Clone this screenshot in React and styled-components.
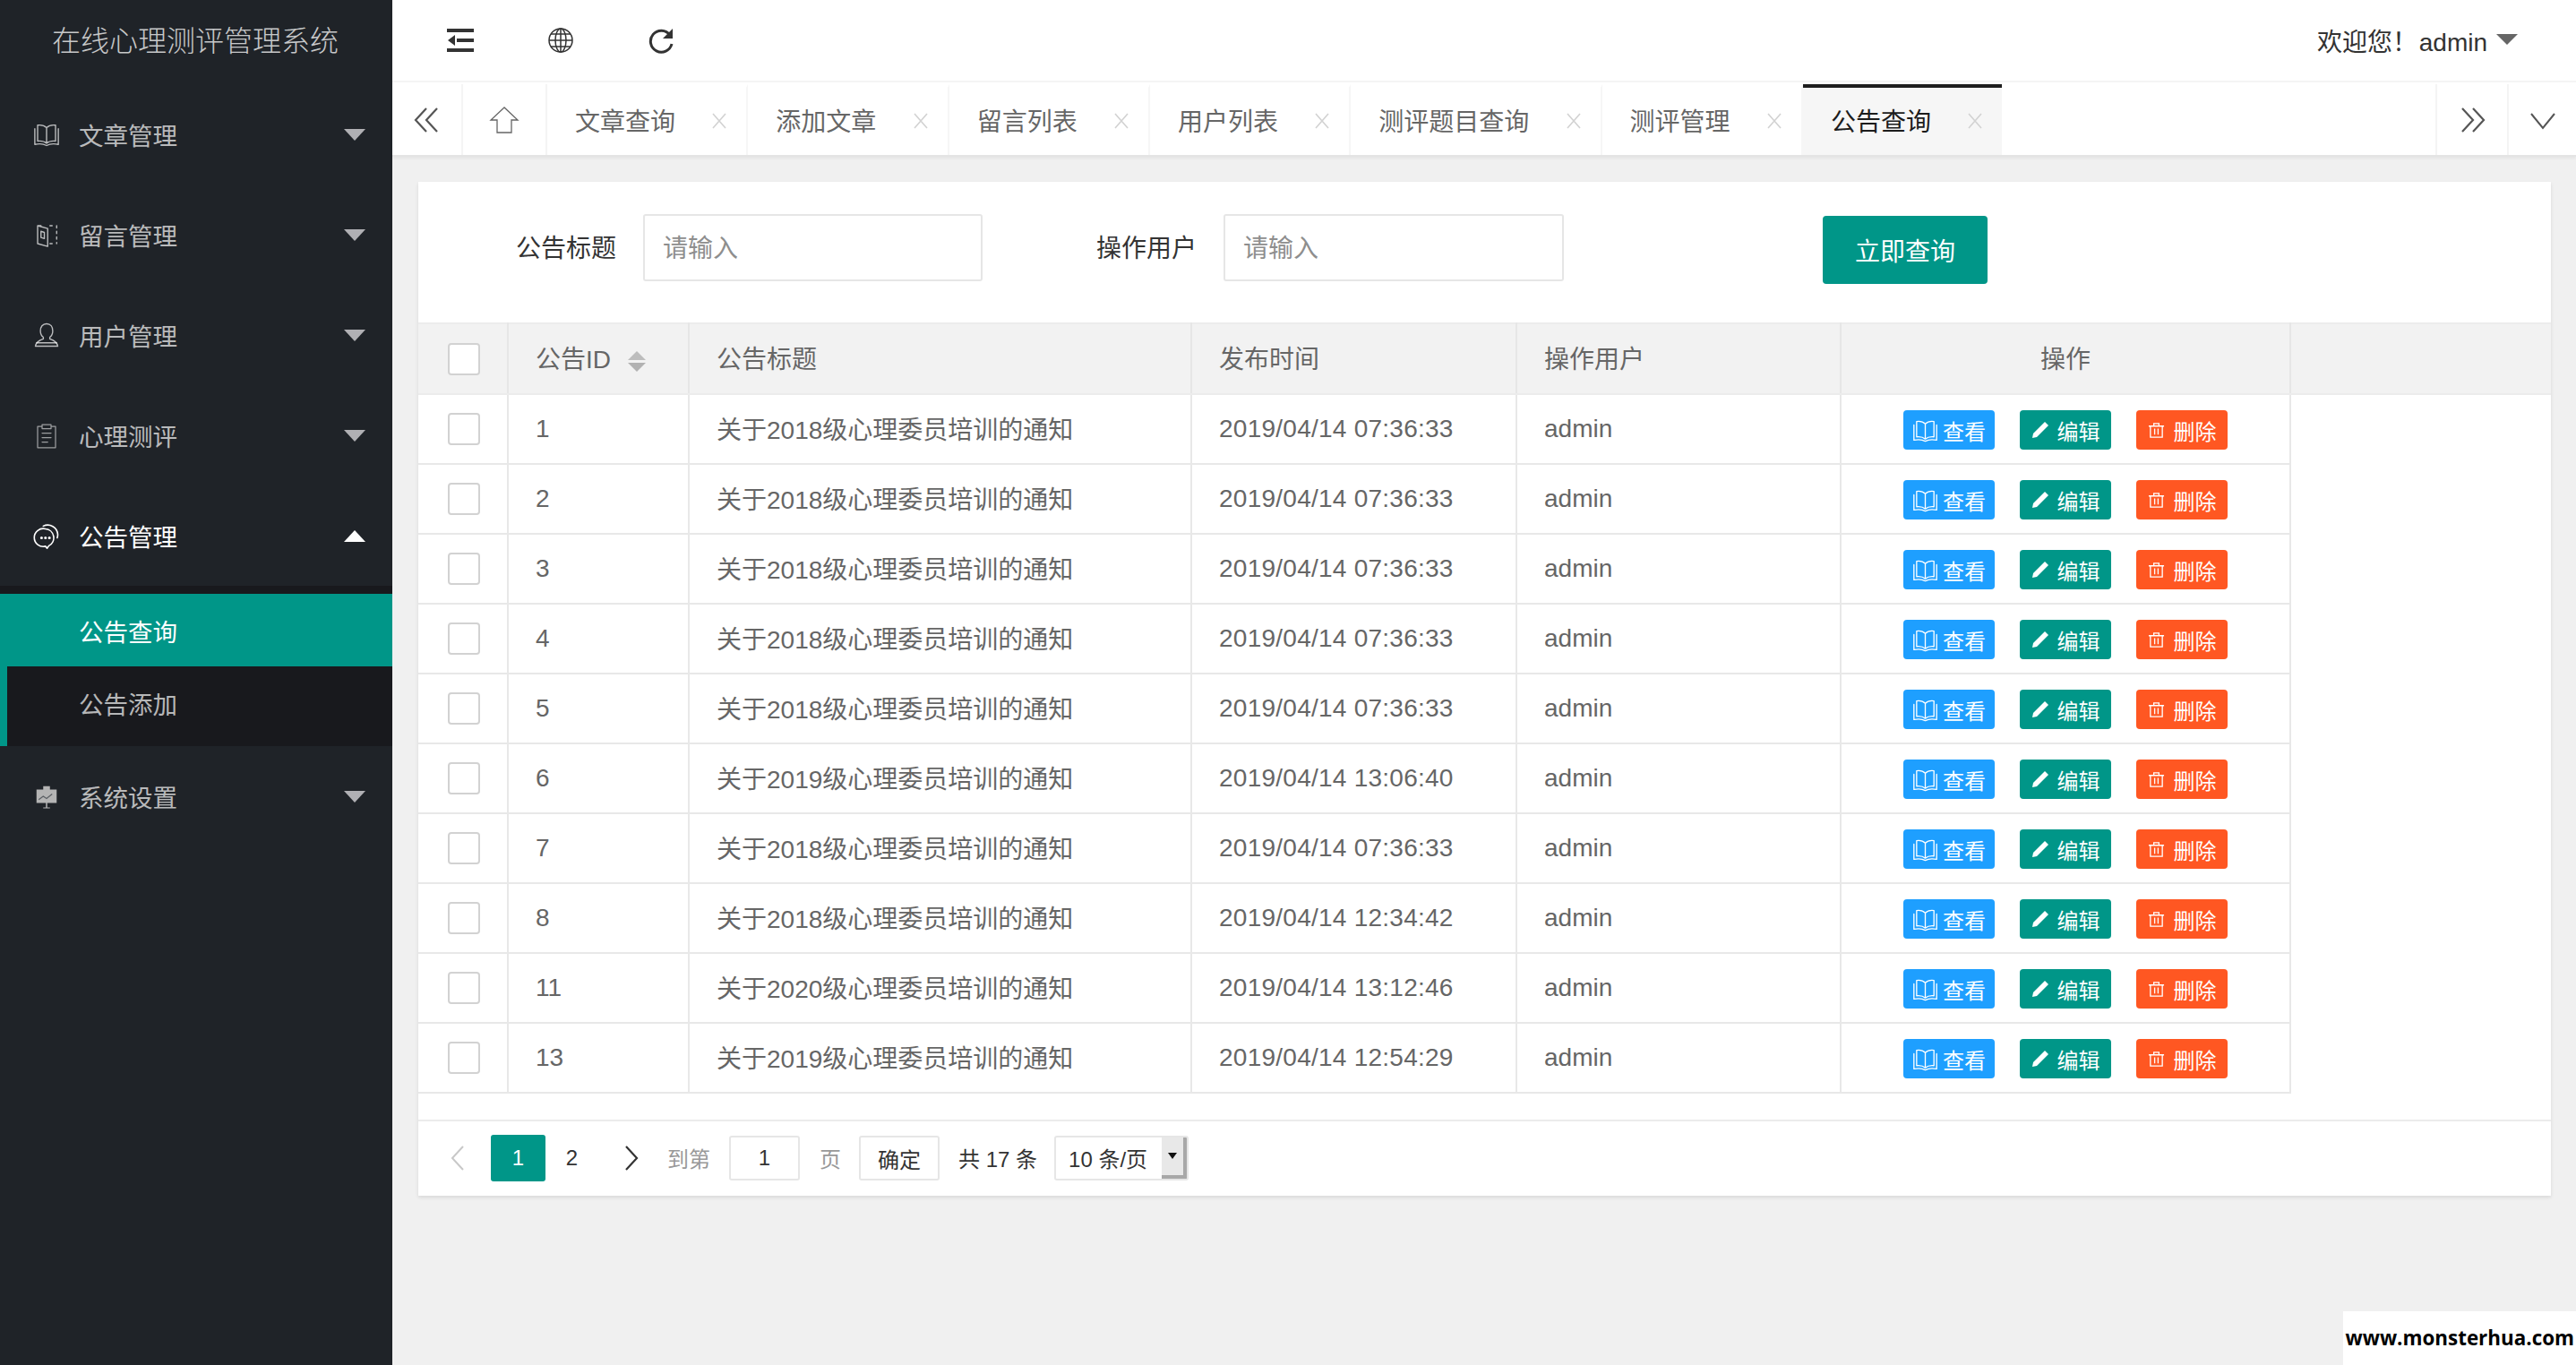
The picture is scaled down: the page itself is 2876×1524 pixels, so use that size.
import React from "react";
import styled, { createGlobalStyle } from "styled-components";

const Global = createGlobalStyle`
  html, body { margin: 0; padding: 0; background: #f0f0f0; }
  body { font-family: "Liberation Sans", "Noto Sans CJK SC", sans-serif; color: #666; }
  * { box-sizing: border-box; }
`;

const Page = styled.div`
  position: relative;
  display: grid;
  grid-template-columns: 438px 1fr;
  width: 2876px;
  height: 1524px;
  overflow: hidden;
  background: #f0f0f0;
`;

/* ---------- sidebar ---------- */
const Sidebar = styled.aside`
  background: #1f2328;
  display: flex;
  flex-direction: column;
`;
const Logo = styled.div`
  height: 94px;
  display: flex;
  align-items: center;
  justify-content: center;
  font-size: 32px;
  font-weight: 300;
  color: rgba(255, 255, 255, 0.75);
  padding: 0 2px 8px 0;
`;
const NavItem = styled.div`
  height: 112px;
  display: flex;
  align-items: center;
  padding: 0 30px 0 37px;
  font-size: 27.5px;
  color: ${(p) => (p.$open ? "#fff" : "rgba(255,255,255,.7)")};
`;
const NavIcon = styled.svg`
  width: 30px;
  height: 30px;
  margin-right: 21px;
  flex: none;
`;
const NavLabel = styled.span`
  flex: 1;
`;
const Caret = styled.i`
  width: 0;
  height: 0;
  border-left: 12px solid transparent;
  border-right: 12px solid transparent;
  ${(p) =>
    p.$up
      ? "border-bottom: 13px solid #fff;"
      : "border-top: 13px solid #b0b0b4;"}
`;
const SubMenu = styled.div`
  background: #18191d;
  padding-top: 9px;
`;
const SubItem = styled.div`
  height: ${(p) => (p.$active ? 81 : 89)}px;
  display: flex;
  align-items: center;
  padding-left: ${(p) => (p.$active ? 88 : 80)}px;
  font-size: 27.5px;
  padding-bottom: ${(p) => (p.$active ? 0 : 8)}px;
  color: ${(p) => (p.$active ? "#fff" : "rgba(255,255,255,.7)")};
  background: ${(p) => (p.$active ? "#009688" : "transparent")};
  border-left: ${(p) => (p.$active ? "0" : "8px solid #009688")};
`;

/* ---------- header ---------- */
const Main = styled.main`
  display: flex;
  flex-direction: column;
  min-width: 0;
`;
const Header = styled.header`
  height: 92px;
  background: #fff;
  border-bottom: 2px solid #f4f4f4;
  display: flex;
  align-items: center;
  padding: 0 65px 0 61px;
`;
const HeadIcon = styled.svg`
  width: 30px;
  height: 30px;
  margin-right: 82px;
  color: #333;
  flex: none;
`;
const Welcome = styled.div`
  margin-left: auto;
  display: flex;
  align-items: center;
  font-size: 28px;
  color: #333;
  word-spacing: -6px;
  white-space: pre;
`;
const UserCaret = styled.i`
  width: 0;
  height: 0;
  margin-left: 10px;
  margin-bottom: 3px;
  border-left: 12px solid transparent;
  border-right: 12px solid transparent;
  border-top: 12px solid #666;
`;

/* ---------- tabs ---------- */
const TabBar = styled.nav`
  height: 83px;
  padding-top: 2px;
  background: #fff;
  border-bottom: 2px solid #e4e4e4;
  box-shadow: 0 2px 3px rgba(0, 0, 0, 0.05);
  display: flex;
  color: #666;
`;
const TabControl = styled.div`
  width: ${(p) => p.$w}px;
  flex: none;
  display: flex;
  align-items: center;
  justify-content: center;
  border-left: ${(p) => (p.$left ? "2px solid #f4f4f4" : "0")};
  border-right: ${(p) => (p.$right ? "2px solid #f4f4f4" : "0")};
`;
const TabList = styled.div`
  flex: 1;
  display: flex;
`;
const Tab = styled.div`
  display: flex;
  align-items: center;
  padding: 0 21px 4px 31px;
  font-size: 28px;
  border-right: ${(p) => (p.$active ? "0" : "2px solid #f6f6f6")};
  border-top: 4px solid ${(p) => (p.$active ? "#1f1f1f" : "transparent")};
  color: ${(p) => (p.$active ? "#1c1c1c" : "#666")};
  background: ${(p) => (p.$active ? "#f6f6f6" : "#fff")};
`;
const TabClose = styled.svg`
  width: 18px;
  height: 18px;
  margin: 3px 0 0 40.3px;
  color: #d2d2d2;
`;

/* ---------- content ---------- */
const Content = styled.div`
  padding: 28px 28px 0 29px;
`;
const Card = styled.section`
  background: #fff;
  box-shadow: 0 2px 4px rgba(0, 0, 0, 0.1);
`;
const SearchForm = styled.div`
  height: 157px;
  display: flex;
  align-items: flex-start;
  padding: 36px 0 0 109px;
`;
const FieldLabel = styled.label`
  font-size: 28px;
  line-height: 77px;
  color: #333;
  margin-right: 30px;
  margin-left: ${(p) => p.$ml || 0}px;
`;
const TextInput = styled.input`
  width: ${(p) => p.$w}px;
  height: 75px;
  border: 2px solid #e6e6e6;
  border-radius: 3px;
  padding: 3px 20px 0;
  font: inherit;
  font-size: 28px;
  outline: none;
  &::placeholder { color: #8e8e8e; }
`;
const SearchButton = styled.button`
  width: 184px;
  height: 76px;
  margin: 2px 0 0 289px;
  border: 0;
  border-radius: 4px;
  background: #009688;
  color: #fff;
  font: inherit;
  font-size: 28px;
`;

const Table = styled.table`
  width: 100%;
  table-layout: fixed;
  border-collapse: collapse;
  font-size: 28px;
  color: #666;
`;
const HeadRow = styled.tr`
  height: 79px;
  background: #f2f2f2;
`;
const HeadCell = styled.th`
  padding: 0 30px 3px;
  font-weight: 400;
  text-align: ${(p) => (p.$center ? "center" : "left")};
  color: #666;
  border-top: 2px solid #ececec;
  border-bottom: 2px solid #ececec;
  border-right: ${(p) => (p.$last ? "0" : "2px solid #e6e6e6")};
`;
const Cell = styled.td`
  height: 78px;
  padding: 0 30px;
  border-bottom: 2px solid #e8e8e8;
  border-right: 2px solid #e8e8e8;
  white-space: nowrap;
`;
const TitleCell = styled(Cell)`
  padding-bottom: 3px;
`;
const TimeCell = styled(Cell)`
  letter-spacing: 0.25px;
`;
const CheckCell = styled(Cell)`
  padding: 0 0 0 33px;
`;
const OpCell = styled(Cell)`
  padding: 2px 0 0;
`;
const Blank = styled.td`
  padding: 0;
`;
const HeadCheckCell = styled(HeadCell)`
  padding: 0 0 0 33px;
`;
const Check = styled.span`
  display: block;
  width: 36px;
  height: 36px;
  background: #fff;
  border: 2px solid #d2d2d2;
  border-radius: 4px;
`;
const SortMark = styled.span`
  display: inline-flex;
  flex-direction: column;
  gap: 3px;
  margin-left: 19px;
  vertical-align: 9px;
`;
const SortArrow = styled.i`
  width: 0;
  height: 0;
  border-left: 10px solid transparent;
  border-right: 10px solid transparent;
  ${(p) =>
    p.$up ? "border-bottom: 10px solid #bdbdbd;" : "border-top: 10px solid #b2b2b2;"}
`;
const Ops = styled.div`
  display: flex;
  justify-content: center;
  gap: 28px;
`;
const OpButton = styled.span`
  width: 102px;
  height: 44px;
  display: flex;
  align-items: center;
  justify-content: center;
  gap: ${(p) => p.$gap}px;
  border-radius: 4px;
  color: #fff;
  font-size: 24px;
  background: ${(p) => p.$bg};
`;
const OpIcon = styled.svg`
  width: ${(p) => p.$s || 26}px;
  height: ${(p) => p.$s || 26}px;
  flex: none;
`;

/* ---------- pagination ---------- */
const Pager = styled.div`
  margin-top: 29px;
  height: 85px;
  border-top: 2px solid #ececec;
  display: flex;
  align-items: center;
  padding: 0 0 2px 13px;
  font-size: 24px;
  color: #333;
`;
const PageLink = styled.span`
  width: ${(p) => p.$w}px;
  height: 52px;
  margin-left: ${(p) => p.$ml || 0}px;
  flex: none;
  display: flex;
  align-items: center;
  justify-content: center;
  border-radius: 3px;
  color: ${(p) => (p.$active ? "#fff" : "#333")};
  background: ${(p) => (p.$active ? "#009688" : "transparent")};
`;
const PagerText = styled.span`
  margin-left: ${(p) => p.$ml}px;
  color: ${(p) => p.$c || "#999"};
  white-space: nowrap;
`;
const PageInput = styled.input`
  width: 79px;
  height: 50px;
  margin-left: 21px;
  border: 2px solid #e6e6e6;
  border-radius: 3px;
  text-align: center;
  font: inherit;
  color: #333;
  outline: none;
`;
const PageConfirm = styled.button`
  width: 90px;
  height: 50px;
  margin-left: 20px;
  border: 2px solid #e6e6e6;
  border-radius: 3px;
  background: #fff;
  font: inherit;
  color: #333;
  padding: 2px 0 0;
`;
const PageSelect = styled.div`
  width: 150px;
  height: 50px;
  margin-left: 19px;
  border: 2px solid #e6e6e6;
  border-radius: 3px;
  display: flex;
  align-items: center;
  padding-left: 14px;
  color: #333;
  overflow: hidden;
`;
const SelectArrow = styled.span`
  width: 28px;
  height: 100%;
  margin-left: auto;
  background: #e8e8e8;
  border-right: 4px solid #a8a8a8;
  border-bottom: 4px solid #a8a8a8;
  display: flex;
  align-items: center;
  justify-content: center;
  &::after {
    content: "";
    border-left: 5px solid transparent;
    border-right: 5px solid transparent;
    border-top: 7px solid #111;
  }
`;

const Watermark = styled.div`
  position: absolute;
  right: 0;
  bottom: 0;
  width: 260px;
  height: 60px;
  background: #fff;
  color: #000;
  font-family: "Open Sans", "Noto Sans", sans-serif;
  font-weight: 700;
  font-size: 22.4px;
  display: flex;
  align-items: center;
  justify-content: flex-end;
  padding: 0 2px 2px 0;
  white-space: nowrap;
`;

/* ---------- drawings ---------- */
const line = { fill: "none", stroke: "currentColor", strokeLinecap: "round", strokeLinejoin: "round" };

const BookPaths = () => (
  <g {...line} strokeWidth="1.100">
    <path d="M12 6C10 4 7 3.400 4 3.800V18c3-.3 6 .2 8 2 2-1.800 5-2.300 8-2V3.800C17 3.400 14 4 12 6zM12 6v14" />
    <path d="M1.500 7v14c4-.8 8-.4 10.500 1 2.500-1.400 6.500-1.800 10.500-1V7" />
  </g>
);

const icons = {
  book: <BookPaths />,
  door: (
    <g {...line} strokeWidth="1.100">
      <path d="M4 4l9 2.500v16L4 20zM4 4h3M7 9l3 1v5.500l-3-1z" />
      <path d="M15 4h2M21 4v2M21 9v2M21 14v2M21 19v1M15 20h2" />
    </g>
  ),
  user: (
    <g {...line} strokeWidth="1.100">
      <path d="M12 2c3.600 0 5.500 2.800 5.500 6.300 0 2.500-1.100 4.500-2.600 5.700v1.500c3 1 6.500 2.300 7.100 6.500H2c.6-4.200 4.100-5.500 7.100-6.500V14c-1.500-1.200-2.600-3.200-2.600-5.700C6.500 4.800 8.400 2 12 2z" />
      <path d="M3 19h18" />
    </g>
  ),
  clip: (
    <g {...line} strokeWidth="1" opacity=".8">
      <path d="M8 4H4v19h16V4h-4M8 2.500h8V6H8zM8 10h8M8 14h8M8 18h5" />
    </g>
  ),
  chat: (
    <g {...line} strokeWidth="1.300">
      <path d="M11 6a8 8 0 1 0 0 15.500l1.500 1.800 1.500-2.200A8 8 0 0 0 11 6z" />
      <path d="M9 3.500A9 9 0 0 1 22 11c0 1-.2 2-.5 3" />
      <circle cx="7.500" cy="14" r=".6" />
      <circle cx="11" cy="14" r=".6" />
      <circle cx="14.500" cy="14" r=".6" />
    </g>
  ),
  board: (
    <g>
      <path fill="#b4b4b4" d="M3 6h18v12H3zM9 3h6v3H9zM11.400 18h1.200v4h-1.200zM9 22h6v.8H9z" />
      <path fill="none" stroke="#5b5f64" strokeWidth="1" d="M5 15l4-3 3 2 5-4" />
    </g>
  ),
};

const Nav = ({ icon, label, open }) => (
  <NavItem $open={open}>
    <NavIcon viewBox="0 0 24 24">{icons[icon]}</NavIcon>
    <NavLabel>{label}</NavLabel>
    <Caret $up={open} />
  </NavItem>
);

const DoubleChevron = ({ right }) => (
  <svg width="30" height="30" viewBox="0 0 30 30" style={right ? { transform: "scaleX(-1)" } : undefined}>
    <path d="M14 2L2 15l12 13M26 2L14 15l12 13" fill="none" stroke="#555" strokeWidth="2.200" />
  </svg>
);

const CloseMark = () => (
  <TabClose viewBox="0 0 18 18">
    <path d="M2 1l14 16M16 1L2 17" fill="none" stroke="currentColor" strokeWidth="1.600" />
  </TabClose>
);

const tabs = ["文章查询", "添加文章", "留言列表", "用户列表", "测评题目查询", "测评管理", "公告查询"];

const rows = [
  ["1", "关于2018级心理委员培训的通知", "2019/04/14 07:36:33"],
  ["2", "关于2018级心理委员培训的通知", "2019/04/14 07:36:33"],
  ["3", "关于2018级心理委员培训的通知", "2019/04/14 07:36:33"],
  ["4", "关于2018级心理委员培训的通知", "2019/04/14 07:36:33"],
  ["5", "关于2018级心理委员培训的通知", "2019/04/14 07:36:33"],
  ["6", "关于2019级心理委员培训的通知", "2019/04/14 13:06:40"],
  ["7", "关于2018级心理委员培训的通知", "2019/04/14 07:36:33"],
  ["8", "关于2018级心理委员培训的通知", "2019/04/14 12:34:42"],
  ["11", "关于2020级心理委员培训的通知", "2019/04/14 13:12:46"],
  ["13", "关于2019级心理委员培训的通知", "2019/04/14 12:54:29"],
];

const columns = [100, 202, 561, 363, 362, 502];

export default function App() {
  return (
    <Page>
      <Global />
      <Sidebar>
        <Logo>在线心理测评管理系统</Logo>
        <Nav icon="book" label="文章管理" />
        <Nav icon="door" label="留言管理" />
        <Nav icon="user" label="用户管理" />
        <Nav icon="clip" label="心理测评" />
        <Nav icon="chat" label="公告管理" open />
        <SubMenu>
          <SubItem $active>公告查询</SubItem>
          <SubItem>公告添加</SubItem>
        </SubMenu>
        <Nav icon="board" label="系统设置" />
      </Sidebar>

      <Main>
        <Header>
          <HeadIcon viewBox="0 0 30 30">
            <path fill="currentColor" d="M0 2h30v4H0zM0 24h30v4H0zM11 13h19v4H11zM1 15l8-6v12z" />
          </HeadIcon>
          <HeadIcon viewBox="0 0 30 30">
            <g fill="none" stroke="currentColor" strokeWidth="1.500">
              <circle cx="15" cy="15" r="13" />
              <ellipse cx="15" cy="15" rx="6" ry="13" />
              <path d="M15 2v26M2 15h26M4 8h22M4 22h22" />
            </g>
          </HeadIcon>
          <HeadIcon viewBox="0 0 30 30">
            <path d="M25 9a12 12 0 1 0 2 10" fill="none" stroke="currentColor" strokeWidth="3" />
            <path d="M28 2v11H17z" fill="currentColor" />
          </HeadIcon>
          <Welcome>
            欢迎您！ admin
            <UserCaret />
          </Welcome>
        </Header>

        <TabBar>
          <TabControl $w={79} $right>
            <DoubleChevron />
          </TabControl>
          <TabControl $w={94} $right>
            <svg width="34" height="30" viewBox="0 0 34 30">
              <path d="M17 1L2 15h7v14h16V15h7z" fill="none" stroke="#666" strokeWidth="1.300" />
            </svg>
          </TabControl>
          <TabList>
            {tabs.map((t, i) => (
              <Tab key={t} $active={i === tabs.length - 1}>
                {t}
                <CloseMark />
              </Tab>
            ))}
          </TabList>
          <TabControl $w={80} $left>
            <DoubleChevron right />
          </TabControl>
          <TabControl $w={77} $left>
            <svg width="30" height="30" viewBox="0 0 30 30">
              <path d="M2 8l13 16L28 8" fill="none" stroke="#555" strokeWidth="2" />
            </svg>
          </TabControl>
        </TabBar>

        <Content>
          <Card>
            <SearchForm>
              <FieldLabel>公告标题</FieldLabel>
              <TextInput $w={379} placeholder="请输入" />
              <FieldLabel $ml={127}>操作用户</FieldLabel>
              <TextInput $w={380} placeholder="请输入" />
              <SearchButton>立即查询</SearchButton>
            </SearchForm>

            <Table>
              <colgroup>
                {columns.map((w, i) => (
                  <col key={i} width={w} />
                ))}
                <col />
              </colgroup>
              <thead>
                <HeadRow>
                  <HeadCheckCell>
                    <Check />
                  </HeadCheckCell>
                  <HeadCell>
                    公告ID
                    <SortMark>
                      <SortArrow $up />
                      <SortArrow />
                    </SortMark>
                  </HeadCell>
                  <HeadCell>公告标题</HeadCell>
                  <HeadCell>发布时间</HeadCell>
                  <HeadCell>操作用户</HeadCell>
                  <HeadCell $center>操作</HeadCell>
                  <HeadCell $last />
                </HeadRow>
              </thead>
              <tbody>
                {rows.map(([id, title, time]) => (
                  <tr key={id}>
                    <CheckCell>
                      <Check />
                    </CheckCell>
                    <Cell>{id}</Cell>
                    <TitleCell>{title}</TitleCell>
                    <TimeCell>{time}</TimeCell>
                    <Cell>admin</Cell>
                    <OpCell>
                      <Ops>
                        <OpButton $bg="#1e9fff" $gap={5}>
                          <OpIcon $s={29} viewBox="0 0 24 24">
                            <BookPaths />
                          </OpIcon>
                          查看
                        </OpButton>
                        <OpButton $bg="#009688" $gap={9}>
                          <OpIcon $s={20} viewBox="0 0 20 20">
                            <path fill="currentColor" d="M15 1l4 4L6 18l-5 1 1-5z" />
                          </OpIcon>
                          编辑
                        </OpButton>
                        <OpButton $bg="#ff5722" $gap={10}>
                          <OpIcon $s={19} viewBox="0 0 20 20">
                            <path
                              fill="none"
                              stroke="currentColor"
                              strokeWidth="1.400"
                              d="M1 5h18M7 5V2h6v3M3 5v13h14V5M8 8v7M12 8v7"
                            />
                          </OpIcon>
                          删除
                        </OpButton>
                      </Ops>
                    </OpCell>
                    <Blank />
                  </tr>
                ))}
              </tbody>
            </Table>

            <Pager>
              <PageLink $w={61}>
                <svg width="16" height="28" viewBox="0 0 16 28">
                  <path d="M14 1L2 14l12 13" fill="none" stroke="#c8c8c8" strokeWidth="2" />
                </svg>
              </PageLink>
              <PageLink $w={61} $ml={7} $active>
                1
              </PageLink>
              <PageLink $w={59}>2</PageLink>
              <PageLink $w={60} $ml={7}>
                <svg width="16" height="28" viewBox="0 0 16 28">
                  <path d="M2 1l12 13L2 27" fill="none" stroke="#333" strokeWidth="2.200" />
                </svg>
              </PageLink>
              <PagerText $ml={10}>到第</PagerText>
              <PageInput value="1" readOnly />
              <PagerText $ml={22}>页</PagerText>
              <PageConfirm>确定</PageConfirm>
              <PagerText $ml={21} $c="#333">
                共 17 条
              </PagerText>
              <PageSelect>
                10 条/页
                <SelectArrow />
              </PageSelect>
            </Pager>
          </Card>
        </Content>
      </Main>

      <Watermark>www.monsterhua.com</Watermark>
    </Page>
  );
}
